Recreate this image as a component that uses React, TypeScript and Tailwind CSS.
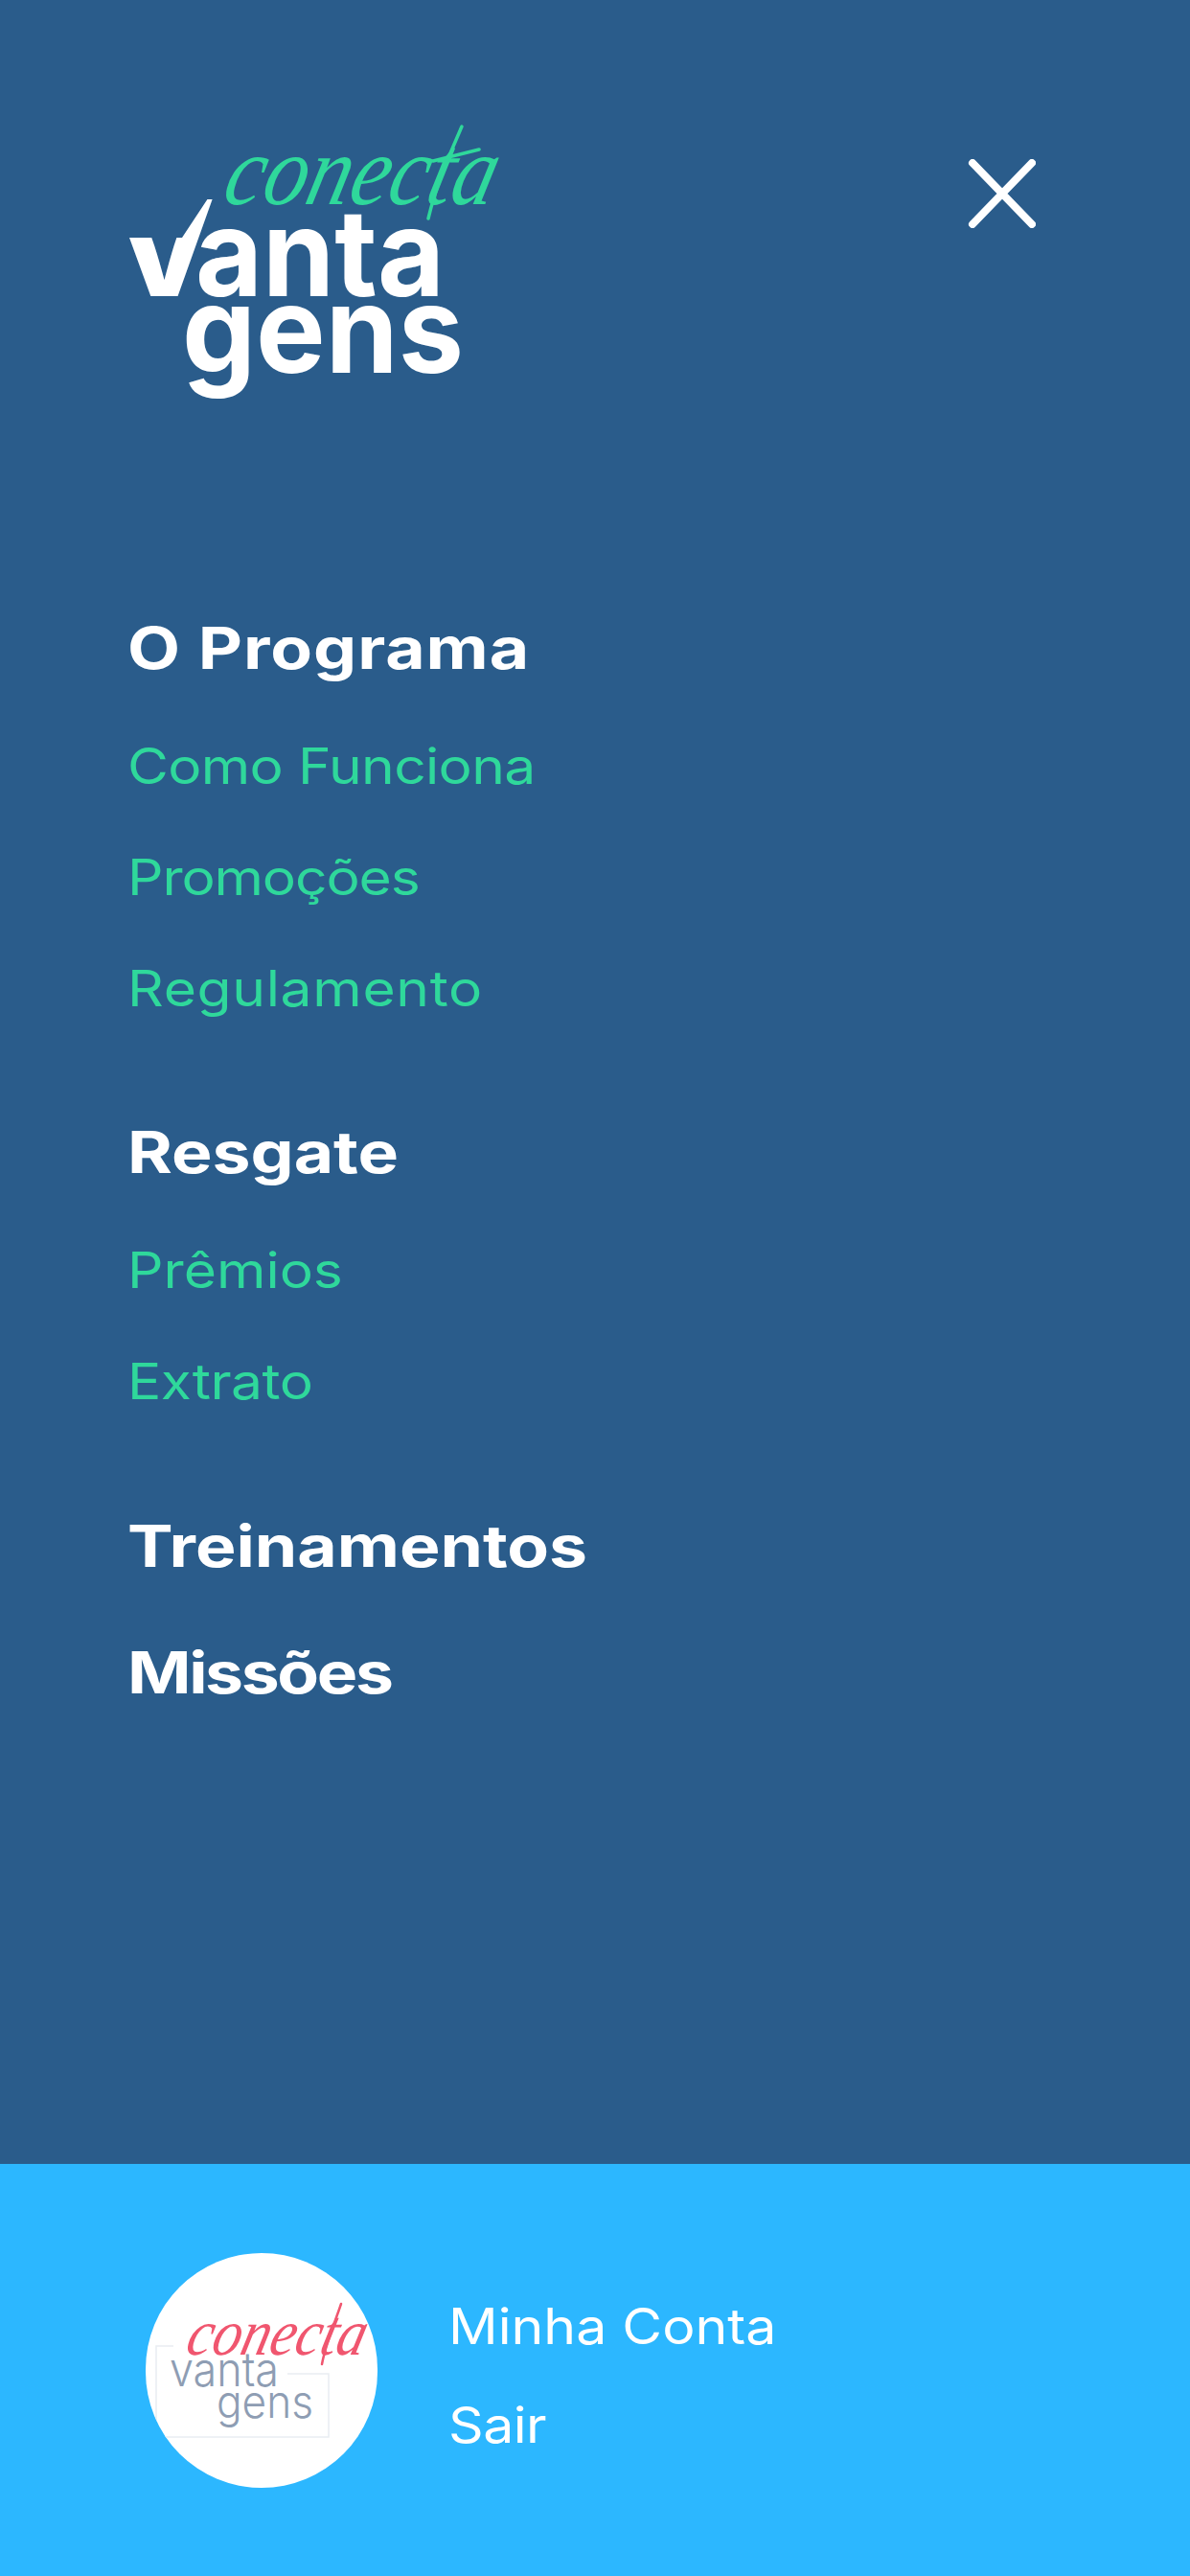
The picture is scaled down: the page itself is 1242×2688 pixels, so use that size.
const sans = "font-['Inter','Liberation_Sans',sans-serif]";

const BrandLogo = () => (
  <svg width="400" height="295" viewBox="130 125 400 295" className="shrink-0 overflow-visible" aria-label="Conecta Vantagens">
    <defs>
      <clipPath id="v-cut">
        <polygon points="100,248 190,248 225,195 245,195 245,320 100,320" />
      </clipPath>
    </defs>
    <g fontFamily="Inter, sans-serif" fontWeight="700" fill="#ffffff">
      <g clipPath="url(#v-cut)">
        <text x="117" y="309" fontSize="139" textLength="108" lengthAdjust="spacingAndGlyphs">V</text>
      </g>
      <text x="204" y="309" fontSize="126" textLength="260" lengthAdjust="spacingAndGlyphs">anta</text>
      <text x="190" y="389" fontSize="126" textLength="294" lengthAdjust="spacingAndGlyphs">gens</text>
    </g>
    <g transform="translate(236 213) skewX(-14)">
      <text x="-6" y="0" fontFamily="'Liberation Serif', serif" fontStyle="italic" fontSize="104" fill="#2fd89b" textLength="282" lengthAdjust="spacingAndGlyphs">conecta</text>
    </g>
    <path d="M482 132C470 160 456 190 447 228" stroke="#2fd89b" strokeWidth="3.5" fill="none" strokeLinecap="round" />
    <path d="M452 168L500 156" stroke="#2fd89b" strokeWidth="3.5" fill="none" strokeLinecap="round" />
  </svg>
);

const CloseIcon = () => (
  <svg width="72" height="72" viewBox="0 0 72 72" className="shrink-0" aria-hidden="true">
    <path d="M6 4L68 68M68 4L6 68" stroke="#ffffff" strokeWidth="8" strokeLinecap="round" />
  </svg>
);

const Avatar = () => (
  <div className="flex h-[245px] w-[242px] shrink-0 items-center justify-center overflow-hidden rounded-full bg-white">
    <svg width="242" height="245" viewBox="152 2351 242 245" aria-hidden="true">
      <path d="M181 2448H163V2543H343V2477H300" fill="none" stroke="#e9edf2" strokeWidth="1.5" />
      <g fontFamily="Inter, sans-serif" fontWeight="300" fill="#8e9db3">
        <text x="177" y="2490" fontSize="50" textLength="114" lengthAdjust="spacingAndGlyphs">vanta</text>
        <text x="226" y="2523" fontSize="48" textLength="101" lengthAdjust="spacingAndGlyphs">gens</text>
      </g>
      <g transform="translate(195 2457) skewX(-14)">
        <text x="-3" y="0" fontFamily="'Liberation Serif', serif" fontStyle="italic" fontSize="68" fill="#f0566f" textLength="186" lengthAdjust="spacingAndGlyphs">conecta</text>
      </g>
      <path d="M356 2404C349 2425 340 2445 336 2467" stroke="#f0566f" strokeWidth="2.5" fill="none" strokeLinecap="round" />
    </svg>
  </div>
);

const Heading = ({ children, className = '' }: { children: string; className?: string }) => (
  <h2 className={`w-fit origin-left scale-x-[1.19] text-[60px] leading-[132px] font-bold text-white ${className}`}>
    {children}
  </h2>
);

const SubLink = ({ children, className = '' }: { children: string; className?: string }) => (
  <a className={`block w-fit origin-left scale-x-[1.13] text-[52px] leading-[116px] text-[#2fd89b] ${className}`}>
    {children}
  </a>
);

export default function App() {
  return (
    <main className={`flex h-[2688px] w-[1242px] flex-col overflow-hidden bg-[#2a5c8b] ${sans}`}>
      <div className="flex-1 pl-[133px]">
        <header className="-ml-[3px] flex items-start justify-between pt-[125px] pr-[161px]">
          <BrandLogo />
          <div className="pt-[41px]">
            <CloseIcon />
          </div>
        </header>
        <nav className="mt-[190px]">
          <Heading className="tracking-[0.8px]">O Programa</Heading>
          <SubLink className="tracking-[-0.6px]">Como Funciona</SubLink>
          <SubLink className="tracking-[-1px]">Promoções</SubLink>
          <SubLink className="tracking-[0.6px]">Regulamento</SubLink>
          <div className="mt-[46px]">
            <Heading>Resgate</Heading>
          </div>
          <SubLink>Prêmios</SubLink>
          <SubLink className="tracking-[-0.4px]">Extrato</SubLink>
          <div className="mt-[47px]">
            <Heading>Treinamentos</Heading>
          </div>
          <Heading className="tracking-[-2px]">Missões</Heading>
        </nav>
      </div>
      <footer className="flex h-[430px] items-start bg-[#2cb7ff] pt-[93px] pl-[152px]">
        <Avatar />
        <div className="pt-[25px] pl-[74px] text-[52px] leading-[103px] text-white">
          <a className="block w-fit origin-left scale-x-[1.1]">Minha Conta</a>
          <a className="block w-fit origin-left scale-x-[1.1] tracking-[-0.5px]">Sair</a>
        </div>
      </footer>
    </main>
  );
}
